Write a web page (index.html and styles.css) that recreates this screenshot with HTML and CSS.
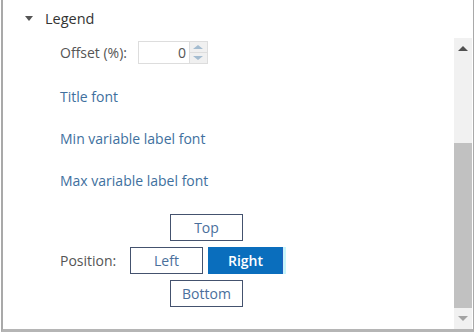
FILE: index.html
```html
<!DOCTYPE html>
<html lang="en">
<head>
    <meta charset="UTF-8">
    <title>Legend</title>
    <link rel="stylesheet" href="styles.css">
</head>
<body>
    <div class="panel">
        <div class="section-head">
            <span class="caret"></span>
            <span class="section-title">Legend</span>
        </div>
        <div class="body">
            <div class="content">
                <div class="row offset-row">
                    <span class="label">Offset (%):</span>
                    <div class="spin">
                        <div class="spin-value">0</div>
                        <div class="spin-btns">
                            <div class="spin-btn"><span class="tri-up"></span></div>
                            <div class="spin-btn"><span class="tri-down"></span></div>
                        </div>
                    </div>
                </div>
                <a class="link">Title font</a>
                <a class="link">Min variable label font</a>
                <a class="link">Max variable label font</a>
                <div class="position">
                    <span class="label pos-label">Position:</span>
                    <div class="pos-grid">
                        <button class="pos-btn top">Top</button>
                        <button class="pos-btn left">Left</button>
                        <button class="pos-btn right active">Right</button>
                        <button class="pos-btn bottom">Bottom</button>
                    </div>
                </div>
            </div>
            <div class="scrollbar">
                <div class="sb-arrow"><span class="sb-up"></span></div>
                <div class="sb-track">
                    <div class="sb-thumb"></div>
                </div>
                <div class="sb-arrow"><span class="sb-down"></span></div>
            </div>
        </div>
    </div>
</body>
</html>
```

FILE: styles.css
```css
body {
    margin: 0;
    font-family: "Open Sans", Lato, sans-serif;
    background: #fff;
}
.panel {
    width: 473px;
    height: 332px;
    margin-left: 1px;
    border-left: 2px solid #a9a9a9;
    border-right: 1px solid #a9a9a9;
    border-bottom: 3px solid #b5b5b5;
    display: flex;
    flex-direction: column;
    box-sizing: border-box;
}
.section-head {
    height: 38px;
    display: flex;
    align-items: center;
    padding-left: 22px;
    padding-bottom: 1px;
    box-sizing: border-box;
}
.caret {
    width: 0;
    height: 0;
    border-left: 4px solid transparent;
    border-right: 4px solid transparent;
    border-top: 5px solid #555;
    margin-right: 12px;
}
.section-title {
    font-size: 14.5px;
    color: #333;
}
.body {
    flex: 1;
    display: flex;
    min-height: 0;
}
.content {
    flex: 1;
    padding-left: 57px;
    display: flex;
    flex-direction: column;
}
.row {
    display: flex;
    align-items: center;
}
.label {
    font-size: 14px;
    color: #555;
}
.offset-row {
    height: 24px;
    margin-top: 2px;
}
.spin {
    display: flex;
    margin-left: 11px;
    height: 23px;
}
.spin-value {
    width: 51px;
    border-top: 1px solid #ddd;
    border-bottom: 1px solid #ddd;
    border-left: 1px solid #ddd;
    font-size: 14px;
    color: #555;
    text-align: right;
    padding-right: 3px;
    line-height: 21px;
    box-sizing: border-box;
}
.spin-btns {
    width: 17px;
    display: flex;
    flex-direction: column;
    border: 1px solid #ddd;
    background: #f0f0f0;
}
.spin-btn {
    flex: 1;
    display: flex;
    align-items: center;
    justify-content: center;
}
.spin-btn + .spin-btn {
    border-top: 1px solid #ddd;
}
.tri-up, .tri-down, .sb-up, .sb-down {
    width: 0;
    height: 0;
    border-left: 5px solid transparent;
    border-right: 5px solid transparent;
}
.tri-up {
    border-bottom: 4px solid #a4bcd0;
}
.tri-down {
    border-top: 4px solid #a4bcd0;
}
.link {
    font-size: 14px;
    color: #40709e;
    line-height: 18px;
    margin-top: 24px;
    cursor: pointer;
}
.position {
    display: flex;
    align-items: center;
    margin-top: 24px;
}
.pos-label {
    width: 70px;
}
.pos-grid {
    display: grid;
    grid-template-columns: 40px 33px 5px 35px 40px;
    grid-template-rows: 27px 27px 27px;
    row-gap: 6px;
}
.pos-btn {
    font-family: "Open Sans", Lato, sans-serif;
    font-size: 14px;
    color: #4a6f9c;
    background: #fff;
    border: 1px solid #44526e;
    padding: 0;
    margin: 0;
}
.top {
    grid-column: 2 / 5;
    grid-row: 1;
}
.left {
    grid-column: 1 / 3;
    grid-row: 2;
}
.right {
    grid-column: 4 / 6;
    grid-row: 2;
}
.bottom {
    grid-column: 2 / 5;
    grid-row: 3;
}
.pos-btn.active {
    background: #0a6ebd;
    color: #fff;
    font-weight: 600;
    border-color: #0a6ebd;
    border-right-color: #2460be;
    box-shadow: 3px 0 0 #c9f5fb;
}
.scrollbar {
    width: 18px;
    margin-right: 1px;
    background: #f1f1f1;
    display: flex;
    flex-direction: column;
}
.sb-arrow {
    height: 22px;
    display: flex;
    align-items: center;
    justify-content: center;
}
.sb-up {
    border-bottom: 5px solid #505050;
}
.sb-down {
    border-top: 5px solid #a3a3a3;
}
.sb-track {
    flex: 1;
    padding-top: 83px;
}
.sb-thumb {
    height: 165px;
    background: #c1c1c1;
}
```
